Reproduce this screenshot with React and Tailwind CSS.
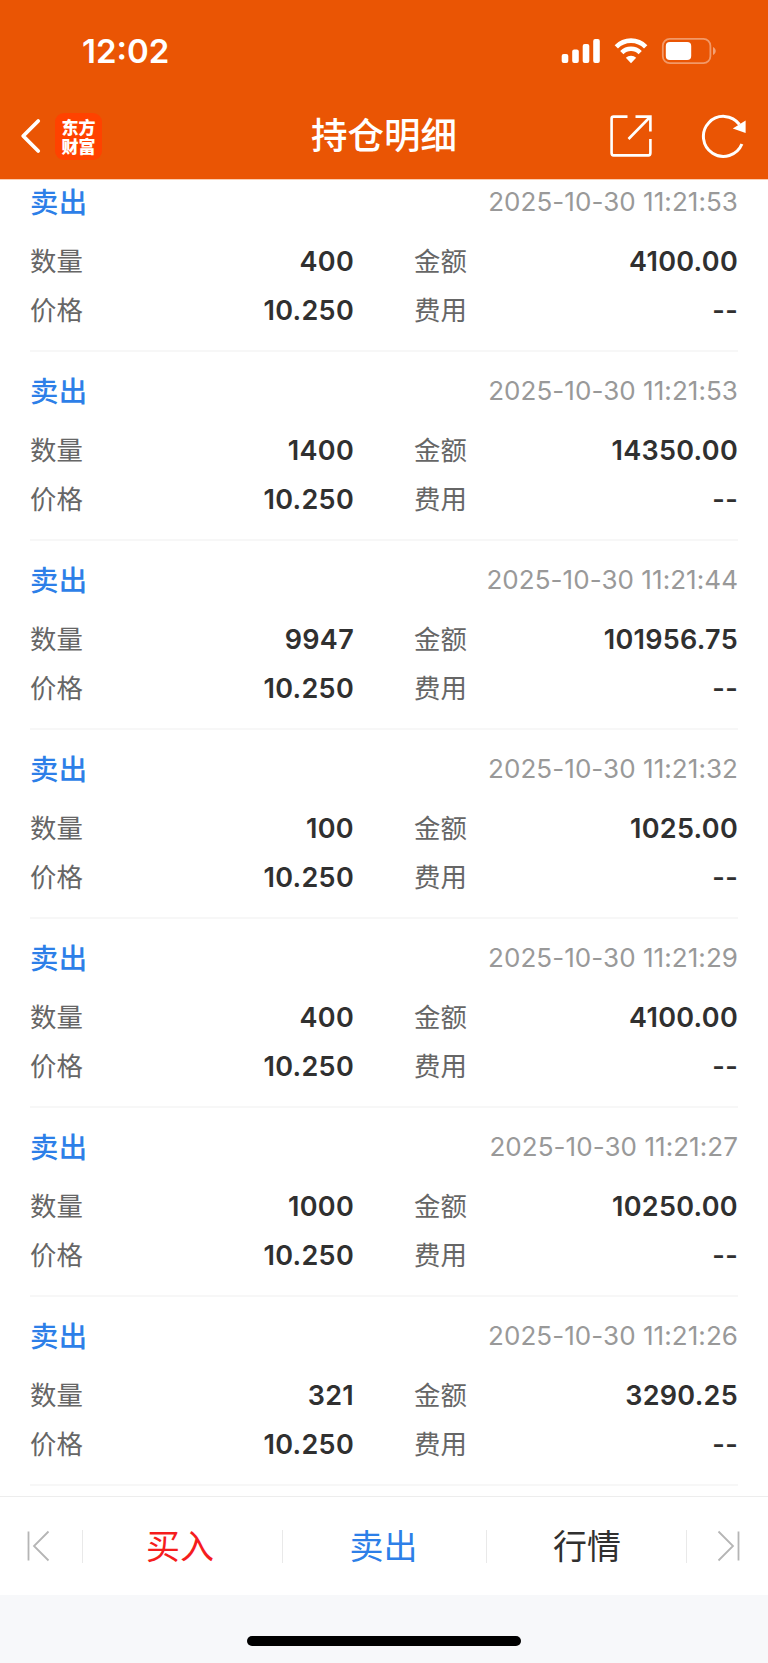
import React from 'react';

const records = [
  { time: '2025-10-30 11:21:53', qty: '400', amount: '4100.00', price: '10.250' },
  { time: '2025-10-30 11:21:53', qty: '1400', amount: '14350.00', price: '10.250' },
  { time: '2025-10-30 11:21:44', qty: '9947', amount: '101956.75', price: '10.250' },
  { time: '2025-10-30 11:21:32', qty: '100', amount: '1025.00', price: '10.250' },
  { time: '2025-10-30 11:21:29', qty: '400', amount: '4100.00', price: '10.250' },
  { time: '2025-10-30 11:21:27', qty: '1000', amount: '10250.00', price: '10.250' },
  { time: '2025-10-30 11:21:26', qty: '321', amount: '3290.25', price: '10.250' },
];

const StatusBar = () => (
  <div className="flex h-[102px] items-center justify-between pl-[82px] pr-[51px]">
    <span className="pt-px text-[33px] leading-none font-semibold">12:02</span>
    <div className="flex items-center">
      <svg width="40" height="26" viewBox="0 0 40 26" fill="currentColor">
        <rect x="0.7" y="16" width="6.6" height="9" rx="2" />
        <rect x="11.2" y="11.5" width="6.6" height="13.5" rx="2" />
        <rect x="21.7" y="6" width="6.6" height="19" rx="2" />
        <rect x="32.2" y="1" width="6.6" height="24" rx="2" />
      </svg>
      <svg className="ml-[13px]" width="34" height="26" viewBox="0 0 34 26" fill="none" stroke="currentColor" strokeWidth="4.6">
        <path d="M2.3 8.8 A20.5 20.5 0 0 1 31.7 8.8" />
        <path d="M7.8 14.6 A13 13 0 0 1 26.2 14.6" />
        <path d="M17 25.2 L11.8 19.8 A7.4 7.4 0 0 1 22.2 19.8 Z" fill="currentColor" stroke="none" />
      </svg>
      <svg className="ml-[13px]" width="56" height="28" viewBox="0 0 56 28" fill="none">
        <rect x="1.8" y="1.8" width="47.6" height="24.4" rx="7" stroke="currentColor" strokeOpacity="0.4" strokeWidth="1.8" />
        <rect x="4.8" y="5" width="25.4" height="18" rx="4" fill="currentColor" />
        <path d="M52 10 C55.6 11.4 55.6 16.6 52 18 Z" fill="currentColor" fillOpacity="0.45" />
      </svg>
    </div>
  </div>
);

const NavBar = () => (
  <div className="flex h-[77px] items-center pb-[9px] pl-[20px] pr-[21px]">
    <div className="flex flex-1 items-center">
      <svg width="22" height="36" viewBox="0 0 22 36" fill="none" stroke="currentColor" strokeWidth="3.8" strokeLinecap="round" strokeLinejoin="round">
        <path d="M18.2 3 L3.2 18 L18.2 33" />
      </svg>
      <div className="ml-[13px] flex h-[47px] w-[47px] items-center justify-center rounded-[9px] bg-[#ff4200] font-['Noto_Sans_CJK_SC',sans-serif] text-[17px] leading-[19.5px] font-black">
        <span>东方<br />财富</span>
      </div>
    </div>
    <h1 className="pl-px text-[36.5px] leading-none font-medium">持仓明细</h1>
    <div className="flex flex-1 items-center justify-end">
      <svg width="44" height="44" viewBox="0 0 44 44" fill="none" stroke="currentColor" strokeWidth="2.6">
        <path d="M18.5 2.6 H4.6 Q2.6 2.6 2.6 4.6 V39 Q2.6 41.4 4.6 41.4 H39.4 Q41.4 41.4 41.4 39 V25" />
        <path d="M26.5 2.6 H41.4 V17.5 M41 3 L19.5 25" />
      </svg>
      <svg className="ml-[48px]" width="46" height="44" viewBox="0 0 46 44" fill="none" stroke="currentColor" strokeWidth="3">
        <path d="M40.9 30 A20 20 0 1 1 38.5 10.5" />
        <path d="M44.6 6.5 V19 L31.8 14.6 Z" fill="currentColor" stroke="none" />
      </svg>
    </div>
  </div>
);

const Field = ({ label, value }) => (
  <div className="flex h-[49px] items-center justify-between">
    <span className="text-[26.4px] text-[#666]">{label}</span>
    <span className="pt-px text-[27px] font-semibold tracking-[0.3px] text-[#303030]">{value}</span>
  </div>
);

const RecordItem = ({ record }) => (
  <div className="mx-[30px] h-[189px] border-b-2 border-[#f7f7f7] pt-[6px]">
    <div className="flex h-[68px] items-center justify-between">
      <span className="text-[28.4px] font-medium tracking-[0.3px] text-[#2d7fe8]">卖出</span>
      <span className="pb-[3px] text-[26px] tracking-[0.06px] text-[#999]">{record.time}</span>
    </div>
    <div className="grid grid-cols-[324px_324px] justify-between gap-x-[60px]">
      <Field label="数量" value={record.qty} />
      <Field label="金额" value={record.amount} />
      <Field label="价格" value={record.price} />
      <Field label="费用" value="--" />
    </div>
  </div>
);

const Divider = () => <span className="h-[33px] w-px shrink-0 bg-[#e9e9e9]" />;

const BottomBar = () => (
  <div className="flex h-[99px] shrink-0 items-center border-t border-[#ededed] bg-white text-[34px]">
    <span className="flex w-[82px] justify-center pr-[6px]">
      <svg width="24" height="32" viewBox="0 0 24 32" fill="none" stroke="#b5b5b5" strokeWidth="1.8">
        <path d="M2.5 1.5 V30.5 M22.5 1.5 L8 16 L22.5 30.5" />
      </svg>
    </span>
    <Divider />
    <span className="w-[199px] pr-[5px] text-center text-[#f51d1d]">买入</span>
    <Divider />
    <span className="w-[203px] pr-[2px] text-center text-[#2d7fe8]">卖出</span>
    <Divider />
    <span className="w-[199px] pl-px text-center text-[#303030]">行情</span>
    <Divider />
    <span className="flex flex-1 justify-center pl-[2px]">
      <svg width="24" height="32" viewBox="0 0 24 32" fill="none" stroke="#b5b5b5" strokeWidth="1.8">
        <path d="M21.5 1.5 V30.5 M1.5 1.5 L16 16 L1.5 30.5" />
      </svg>
    </span>
  </div>
);

const App = () => {
  return (
    <div className="flex h-[1663px] w-[768px] flex-col overflow-hidden bg-white font-['Inter','Noto_Sans_CJK_SC',sans-serif]">
      <header className="h-[179px] shrink-0 bg-[#ea5504] text-white">
        <StatusBar />
        <NavBar />
      </header>
      {/* scrolled list, first record is partly under the header */}
      <main className="h-[1317px] shrink-0 overflow-hidden border-t border-[#fbccb0]">
        <div className="-mt-[17px]">
          {records.map((record, index) => (
            <RecordItem key={index} record={record} />
          ))}
        </div>
      </main>
      <BottomBar />
      <div className="flex flex-1 justify-center bg-[#f7f8fa] pt-[41px]">
        <div className="h-[10px] w-[274px] rounded-full bg-black" />
      </div>
    </div>
  );
};

export default App;
